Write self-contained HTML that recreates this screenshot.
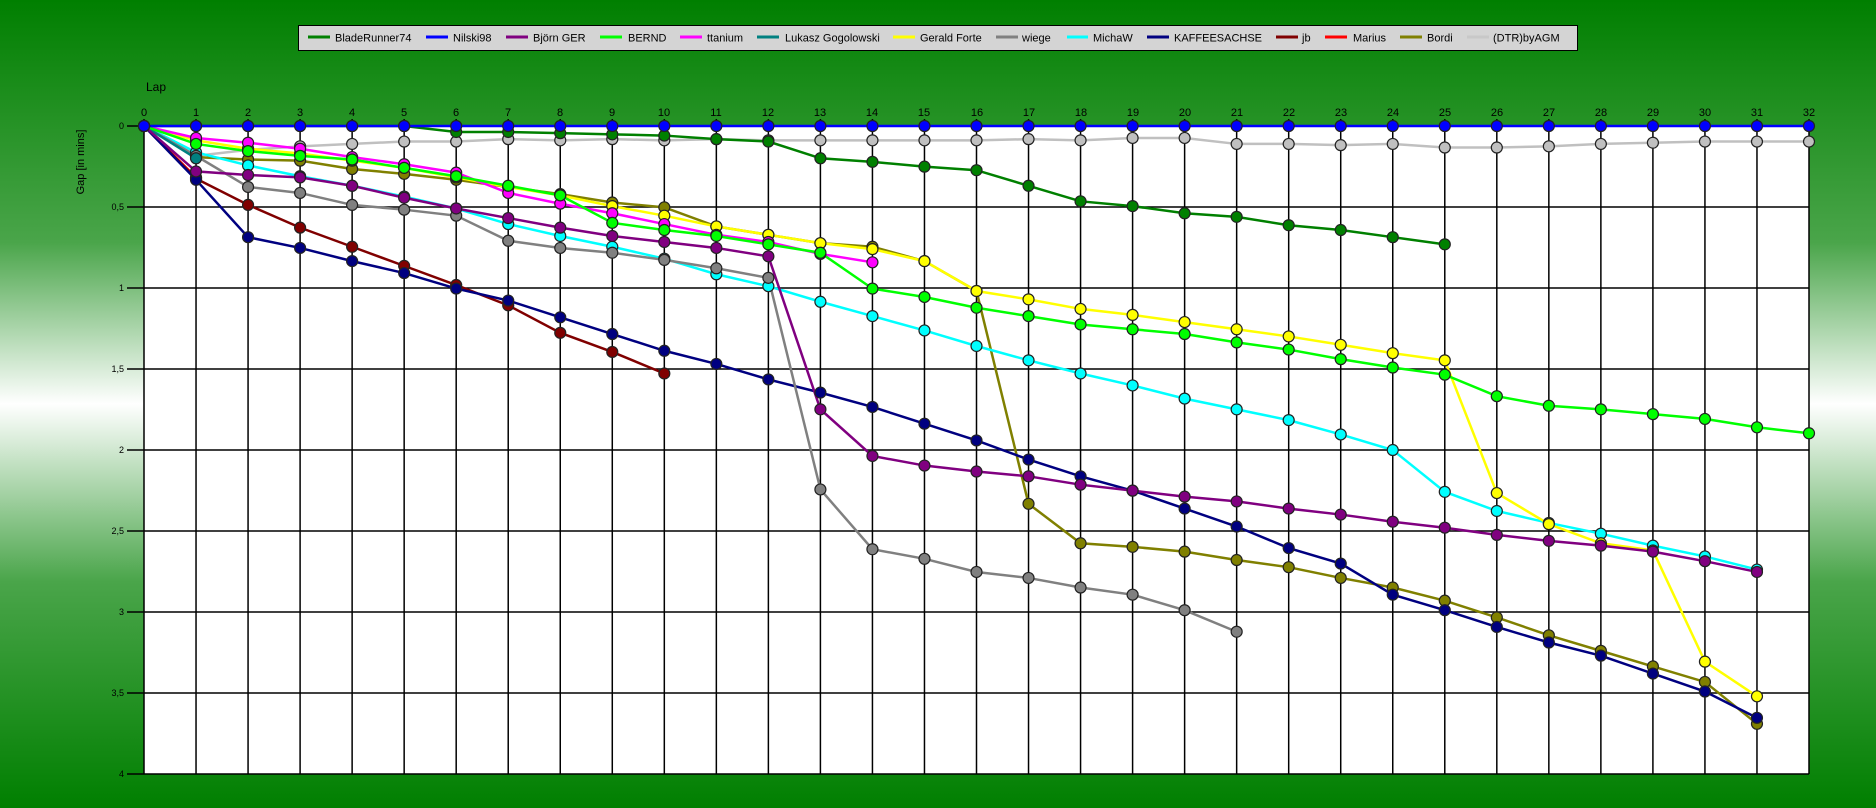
<!DOCTYPE html>
<html><head><meta charset="utf-8">
<style>
html,body{margin:0;padding:0;width:1876px;height:808px;overflow:hidden}
body{background:linear-gradient(to bottom,#007f00 0%,#4aa54a 30%,#ffffff 50%,#4aa54a 72%,#007f00 100%);font-family:"Liberation Sans",sans-serif}
svg{position:absolute;left:0;top:0}
</style></head><body>
<svg id="s" width="1876" height="808" xmlns="http://www.w3.org/2000/svg" font-family="Liberation Sans, sans-serif">
<rect x="144" y="126" width="1665" height="648" fill="#fff"/>
<g id="grid" stroke="#000" stroke-width="1.5"></g>
<g font-size="9" text-anchor="end" fill="#000">
<text x="124" y="129">0</text><text x="124" y="210">0,5</text><text x="124" y="291">1</text><text x="124" y="372">1,5</text><text x="124" y="453">2</text><text x="124" y="534">2,5</text><text x="124" y="615">3</text><text x="124" y="696">3,5</text><text x="124" y="777">4</text>
</g>
<text x="146" y="91" font-size="12">Lap</text>
<text transform="translate(84,162) rotate(-90)" font-size="11" text-anchor="middle">Gap [in mins]</text>
<g font-size="11" text-anchor="middle" fill="#000">
<text x="144" y="116">0</text><text x="196" y="116">1</text><text x="248" y="116">2</text><text x="300" y="116">3</text><text x="352" y="116">4</text><text x="404" y="116">5</text><text x="456" y="116">6</text><text x="508" y="116">7</text><text x="560" y="116">8</text><text x="612" y="116">9</text><text x="664" y="116">10</text><text x="716" y="116">11</text><text x="768" y="116">12</text><text x="820" y="116">13</text><text x="872" y="116">14</text><text x="924" y="116">15</text><text x="977" y="116">16</text><text x="1029" y="116">17</text><text x="1081" y="116">18</text><text x="1133" y="116">19</text><text x="1185" y="116">20</text><text x="1237" y="116">21</text><text x="1289" y="116">22</text><text x="1341" y="116">23</text><text x="1393" y="116">24</text><text x="1445" y="116">25</text><text x="1497" y="116">26</text><text x="1549" y="116">27</text><text x="1601" y="116">28</text><text x="1653" y="116">29</text><text x="1705" y="116">30</text><text x="1757" y="116">31</text><text x="1809" y="116">32</text>
</g>
<g id="data"></g>
<rect x="298.5" y="25.5" width="1279" height="25" fill="#d4d4d4" stroke="#000" stroke-width="1"/>
<g font-size="11" fill="#000" stroke-width="3">
<line x1="308" y1="37" x2="330" y2="37" stroke="#008000"/><text x="335" y="41.5">BladeRunner74</text>
<line x1="426" y1="37" x2="448" y2="37" stroke="#0000ff"/><text x="453" y="41.5">Nilski98</text>
<line x1="506" y1="37" x2="528" y2="37" stroke="#800080"/><text x="533" y="41.5">Björn GER</text>
<line x1="600" y1="37" x2="622" y2="37" stroke="#00ff00"/><text x="628" y="41.5">BERND</text>
<line x1="680" y1="37" x2="702" y2="37" stroke="#ff00ff"/><text x="707" y="41.5">ttanium</text>
<line x1="757" y1="37" x2="779" y2="37" stroke="#008080"/><text x="785" y="41.5">Lukasz Gogolowski</text>
<line x1="893" y1="37" x2="915" y2="37" stroke="#ffff00"/><text x="920" y="41.5">Gerald Forte</text>
<line x1="996" y1="37" x2="1018" y2="37" stroke="#808080"/><text x="1022" y="41.5">wiege</text>
<line x1="1067" y1="37" x2="1088" y2="37" stroke="#00ffff"/><text x="1093" y="41.5">MichaW</text>
<line x1="1147" y1="37" x2="1169" y2="37" stroke="#000080"/><text x="1174" y="41.5">KAFFEESACHSE</text>
<line x1="1276" y1="37" x2="1298" y2="37" stroke="#800000"/><text x="1302" y="41.5">jb</text>
<line x1="1325" y1="37" x2="1347" y2="37" stroke="#ff0000"/><text x="1353" y="41.5">Marius</text>
<line x1="1400" y1="37" x2="1422" y2="37" stroke="#808000"/><text x="1427" y="41.5">Bordi</text>
<line x1="1467" y1="37" x2="1489" y2="37" stroke="#c8c8c8"/><text x="1493" y="41.5">(DTR)byAGM</text>
</g>
</svg>
<script>
var NS="http://www.w3.org/2000/svg";
function el(n,a,p){var e=document.createElementNS(NS,n);for(var k in a)e.setAttribute(k,a[k]);p.appendChild(e);return e;}
var g=document.getElementById("grid");
function X(i){return 144+i*(1665/32);}
for(var i=0;i<=32;i++){el("line",{x1:X(i),y1:119,x2:X(i),y2:774},g);}
for(var j=0;j<=8;j++){var y=126+j*81;el("line",{x1:127,y1:y,x2:1809,y2:y},g);}
function Y(d){return 126+(d-105)*1.1956;}
var S=[
["#c0c0c0",[105,130,125,122,120,118,118,116,117,116,117,116,117,117,117,117,117,116,117,115,115,120,120,121,120,123,123,122,120,119,118,118,118]],
["#808000",[105,131,133,134,141,145,150,156,162,169,173,189,196,203,206,218,243,421,454,457,461,468,474,483,491,502,516,531,544,557,570,605]],
["#ff0000",[105,148]],
["#800000",[105,149,171,190,206,222,238,255,278,294,312]],
["#000080",[105,150,198,207,218,228,241,251,265,279,293,304,317,328,340,354,368,384,398,410,425,440,458,471,497,510,524,537,548,563,578,600]],
["#00ffff",[105,127,138,147,155,164,174,187,197,206,216,229,239,252,264,276,289,301,312,322,333,342,351,363,376,411,427,437,446,456,465,476]],
["#808080",[105,130,156,161,171,175,180,201,207,211,217,224,232,409,459,467,478,483,491,497,510,528]],
["#ffff00",[105,117,124,128,134,140,148,156,163,172,180,189,196,203,208,218,243,250,258,263,269,275,281,288,295,301,412,438,454,460,553,582]],
["#008080",[105,132]],
["#ff00ff",[105,115,119,124,131,137,144,161,170,178,187,196,202,212,219]],
["#00ff00",[105,120,126,130,133,140,147,155,163,186,192,197,204,211,241,248,257,264,271,275,279,286,292,300,307,313,331,339,342,346,350,357,362]],
["#800080",[105,143,146,148,155,165,174,182,190,197,202,207,214,342,381,389,394,398,405,410,415,419,425,430,436,441,447,452,456,461,469,478]],
["#008000",[105,105,105,105,105,105,110,110,111,112,113,116,118,132,135,139,142,155,168,172,178,181,188,192,198,204]],
["#0000ff",[105,105,105,105,105,105,105,105,105,105,105,105,105,105,105,105,105,105,105,105,105,105,105,105,105,105,105,105,105,105,105,105,105]]
];
var d=document.getElementById("data");
S.forEach(function(s){
 var pts=s[1].map(function(v,i){return X(i)+","+Y(v);}).join(" ");
 el("polyline",{points:pts,fill:"none",stroke:s[0],"stroke-width":2.5},d);
});
S.forEach(function(s){
 s[1].forEach(function(v,i){el("circle",{cx:X(i),cy:Y(v),r:5.5,fill:s[0],stroke:"#222","stroke-width":1.2},d);});
});
</script>
</body></html>
